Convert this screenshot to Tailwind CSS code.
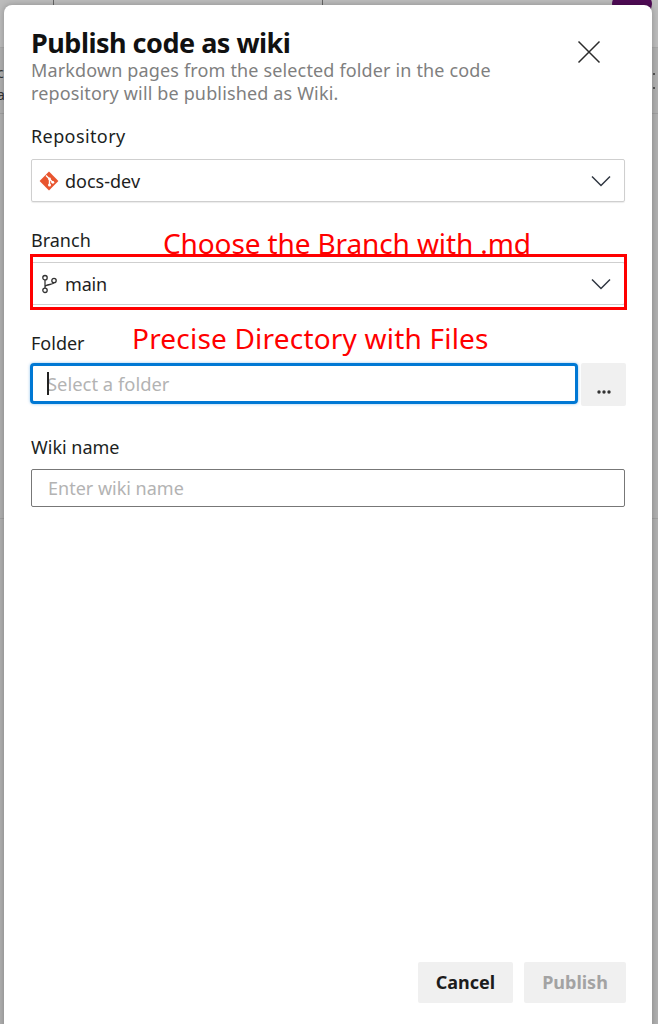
<!DOCTYPE html>
<html>
<head>
<script src="https://cdn.jsdelivr.net/npm/@tailwindcss/browser@4"></script>
</head>
<body class="m-0 bg-[#b5b5b5]">
<div class="relative w-[658px] h-[1024px] overflow-hidden bg-[#b0b0b0] font-['Noto_Sans','Open_Sans',sans-serif] text-[#201f1e]">
  <!-- dimmed page behind -->
  <div class="absolute left-0 top-0 w-full h-[48px] bg-[#bcbcbc]"></div>
  <div class="absolute left-0 top-[47px] w-full h-px bg-[#a8a8a8]"></div>
  <div class="absolute left-0 top-[113px] w-full h-px bg-[#a0a0a0]"></div>
  <div class="absolute left-0 top-[518px] w-full h-px bg-[#a0a0a0]"></div>
  <div class="absolute left-[53px] top-0 w-px h-[5px] bg-[#666]"></div>
  <div class="absolute left-[322px] top-0 w-px h-[5px] bg-[#666]"></div>
  <div class="absolute left-[612px] top-[-6px] w-[40px] h-[20px] rounded-full bg-[#4f0b55]"></div>
  <div class="absolute left-[-3px] top-[62px] text-[14px] leading-[22px] text-[#333]">c<br>a</div>
  <div class="absolute left-[653px] top-[73px] w-[2px] h-[2px] bg-[#555]"></div>
  <div class="absolute left-[653px] top-[87px] w-[2px] h-[2px] bg-[#555]"></div>

  <!-- dialog -->
  <div class="absolute left-[4px] top-[5px] w-[648px] h-[1040px] bg-white rounded-[8px] shadow-[0_0_6px_rgba(0,0,0,0.25)] pl-[27px] pr-[27px] pt-[20px]">
    <div class="flex justify-between items-start">
      <div>
        <h1 class="text-[27px] leading-[36px] font-bold tracking-[-0.5px] text-[#111] m-0">Publish code as wiki</h1>
        <p class="text-[18px] leading-[23px] tracking-[0.15px] text-[#7f7f7f] w-[490px] mt-[-2px]">Markdown pages from the selected folder in the code repository will be published as Wiki.</p>
      </div>
      <button class="mt-[15px] mr-[24px]" aria-label="Close">
        <svg width="24" height="24" viewBox="0 0 24 24" fill="none" stroke="#2b2b2b" stroke-width="1.5"><path d="M1.5 1.5 22.5 22.5M22.5 1.5 1.5 22.5"/></svg>
      </button>
    </div>

    <div class="mt-[19px] text-[18px] leading-[24px] h-[24px] tracking-[0.4px]">Repository</div>
    <div class="mt-[11px] h-[43px] border border-[#cfcfcf] rounded-[2px] flex items-center pl-[7px] pr-[13px] shadow-[0_1px_1px_rgba(0,0,0,0.08)]">
      <svg width="20" height="20" viewBox="0 0 20 20" class="shrink-0"><path fill="#e8552f" d="M10 .6 19.4 10 10 19.4.6 10z"/><path d="M7 4.5 10.5 8M10.5 8v6M10.5 8l3.5 3.5" stroke="#fff" stroke-width="1.4" fill="none"/><circle cx="10.5" cy="14" r="1.5" fill="#fff"/><circle cx="10.5" cy="8" r="1.4" fill="#fff"/><circle cx="13.8" cy="11.3" r="1.4" fill="#fff"/></svg>
      <span class="ml-[6px] text-[18px] leading-[24px] text-[#1e1e1e] flex-1">docs-dev</span>
      <svg width="20" height="12" viewBox="0 0 20 12" fill="none" stroke="#2f3640" stroke-width="1.5"><path d="M1 1.5 10 10.5 19 1.5"/></svg>
    </div>

    <div class="mt-[26px] text-[18px] leading-[24px] h-[24px]">Branch</div>
    <div class="mt-[10px] h-[43px] border border-[#cfcfcf] rounded-[2px] flex items-center pl-[7px] pr-[13px]">
      <svg width="20" height="20" viewBox="0 0 20 20" fill="none" stroke="#333" stroke-width="1.3" class="shrink-0"><circle cx="6" cy="3.7" r="2.2"/><circle cx="6" cy="16.3" r="2.2"/><circle cx="15" cy="6.5" r="2.2"/><path d="M6 6v8M6 13c0-3 8.5-2 9-4.3"/></svg>
      <span class="ml-[6px] text-[18px] leading-[24px] tracking-[-0.2px] text-[#1e1e1e] flex-1">main</span>
      <svg width="20" height="12" viewBox="0 0 20 12" fill="none" stroke="#2f3640" stroke-width="1.5"><path d="M1 1.5 10 10.5 19 1.5"/></svg>
    </div>

    <div class="mt-[26px] text-[18px] leading-[24px] h-[24px]">Folder</div>
    <div class="mt-[8px] flex items-start gap-[3px] h-[43px] -mr-px">
      <div class="-ml-px w-[548px] h-[41px] border-[3px] border-[#0078d4] rounded-[4px] shadow-[0_0_3px_rgba(0,120,212,0.45)] flex items-center pl-[14px] text-[18.4px] text-[#b3b3b3] relative"><span class="absolute left-[14px] top-[6px] w-[2px] h-[23px] bg-[#222]"></span>Select a folder</div>
      <div class="flex-1 h-[43px] bg-[#f0f0f0] rounded-[2px] flex items-center justify-center pt-[14px]">
        <svg width="14" height="4" viewBox="0 0 14 4" fill="#333"><circle cx="2" cy="2" r="1.7"/><circle cx="7" cy="2" r="1.7"/><circle cx="12" cy="2" r="1.7"/></svg>
      </div>
    </div>

    <div class="mt-[29px] text-[18px] leading-[24px] h-[24px]">Wiki name</div>
    <div class="mt-[10px] h-[38px] border border-[#777] rounded-[2px] flex items-center pl-[16px] text-[18px] text-[#b3b3b3]">Enter wiki name</div>
  </div>

  <!-- footer buttons -->
  <div class="absolute left-[418px] top-[962px] flex gap-[11px]">
    <button class="w-[95px] h-[41px] bg-[#f0f0f0] rounded-[2px] text-[18px] font-bold text-[#1c1c1c]">Cancel</button>
    <button class="w-[102px] h-[41px] bg-[#f0f0f0] rounded-[2px] text-[18px] font-bold text-[#a3a3a3]">Publish</button>
  </div>

  <!-- annotations -->
  <div class="absolute left-[30px] top-[254px] w-[597px] h-[56px] border-[3px] border-[#ff0000]"></div>
  <div class="absolute left-[163px] top-[225px] text-[28px] leading-[36px] tracking-[-0.12px] text-[#ff0000] whitespace-nowrap">Choose the Branch with .md</div>
  <div class="absolute left-[132px] top-[320px] text-[28px] leading-[36px] tracking-[0.2px] text-[#ff0000] whitespace-nowrap">Precise Directory with Files</div>
</div>
</body>
</html>
